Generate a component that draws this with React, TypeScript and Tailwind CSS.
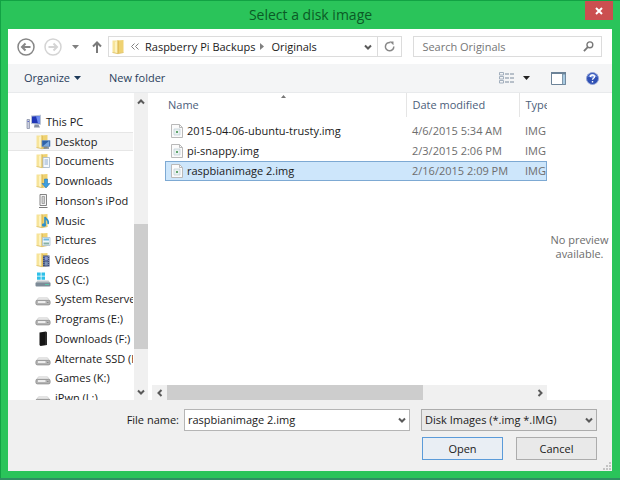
import type { ReactNode } from "react";
import { cx } from "class-variance-authority";

type IconName =
  | "pc"
  | "desktop"
  | "documents"
  | "downloads"
  | "ipod"
  | "music"
  | "pictures"
  | "videos"
  | "system"
  | "drive"
  | "phone";

type Place = { label: string; icon: IconName; root?: boolean };

const places: Place[] = [
  { label: "This PC", icon: "pc", root: true },
  { label: "Desktop", icon: "desktop" },
  { label: "Documents", icon: "documents" },
  { label: "Downloads", icon: "downloads" },
  { label: "Honson's iPod", icon: "ipod" },
  { label: "Music", icon: "music" },
  { label: "Pictures", icon: "pictures" },
  { label: "Videos", icon: "videos" },
  { label: "OS (C:)", icon: "system" },
  { label: "System Reserved", icon: "drive" },
  { label: "Programs (E:)", icon: "drive" },
  { label: "Downloads (F:)", icon: "phone" },
  { label: "Alternate SSD (H:)", icon: "drive" },
  { label: "Games (K:)", icon: "drive" },
  { label: "iPwn (L:)", icon: "drive" },
];

const files = [
  { name: "2015-04-06-ubuntu-trusty.img", date: "4/6/2015 5:34 AM", type: "IMG File" },
  { name: "pi-snappy.img", date: "2/3/2015 2:06 PM", type: "IMG File" },
  { name: "raspbianimage 2.img", date: "2/16/2015 2:09 PM", type: "IMG File" },
];

const chevrons = {
  up: "M2 6.500 5 3.500l3 3",
  down: "M2 3.500 5 6.500l3-3",
  left: "M6.500 2 3.500 5l3 3",
  right: "M3.500 2 6.500 5l-3 3",
};

function Chevron({ to }: { to: keyof typeof chevrons }) {
  return (
    <svg className="size-[10px] shrink-0" fill="none" stroke="#5a5a5a" strokeWidth="2" viewBox="0 0 10 10">
      <path d={chevrons[to]} />
    </svg>
  );
}

function Caret({ color = "#1e3a5a" }: { color?: string }) {
  return (
    <svg className="h-1 w-[7px] shrink-0" viewBox="0 0 7 4">
      <path d="M0 0h7L3.500 4z" fill={color} />
    </svg>
  );
}

function Folder({ children }: { children?: ReactNode }) {
  return (
    <>
      <path d="M1.500 1.500h5v13l-5-1z" fill="#f7e49a" />
      <path d="M6 1.500 12.500 1v12.500L6 14.500z" fill="#efd272" />
      <path d="M4 3 7 1.500v13l-3-1z" fill="#fdf3bf" />
      <path d="M7 1.500v13" stroke="#d6ae45" />
      <path d="M1.500 13.500 7 14.700l5.500-1.200" fill="none" stroke="#dcbc5e" strokeWidth=".8" />
      {children}
    </>
  );
}

const drawings: Record<IconName, ReactNode> = {
  pc: (
    <>
      <path d="M5 1.500 15 .8v10L5 10z" fill="#b9c3d6" />
      <path d="M6 2.500 14 2v7.500L6 9z" fill="#1f35b5" />
      <path d="M10 2.300 14 2v7.500l-2-.1z" fill="#6d8cf0" />
      <path d="M8.500 10.500h4l1.500 3H8z" fill="#8891a3" />
      <path d="M1 5.500h2.500v9H1z" fill="#c9cede" stroke="#7f88a0" strokeWidth=".7" />
      <path d="M1.500 7.500h1.500" stroke="#5965c9" />
    </>
  ),
  desktop: (
    <Folder>
      <path d="M7 6.500h8v6H7z" fill="#2e62a8" stroke="#6f93c4" strokeWidth=".7" />
      <path d="m8 12 6-5v5z" fill="#78a6dd" />
      <path d="M8.500 14h5.500" stroke="#5d6c80" strokeWidth="1.300" />
    </Folder>
  ),
  documents: (
    <Folder>
      <path d="M8 4.500h6.500v10H8z" fill="#f5f9fd" stroke="#a3b6cc" strokeWidth=".8" />
      <path d="M9.500 7H13M9.500 9H13M9.500 11H13" stroke="#8fabcd" />
    </Folder>
  ),
  downloads: (
    <Folder>
      <path d="M9.500 6h3v4.500H15l-4 4.500-4-4.500h2.500z" fill="#3c9fe2" stroke="#1b70b5" strokeWidth=".5" />
    </Folder>
  ),
  ipod: (
    <>
      <path d="M5 1.500h6.500v11H5z" fill="#f4f4f4" stroke="#858585" />
      <path d="M7 3.500h2.500v7H7z" fill="#cfcfcf" stroke="#909090" strokeWidth=".7" />
      <path d="M4 14.500h8.500" stroke="#7a7a7a" />
    </>
  ),
  music: (
    <Folder>
      <path d="M10 11.500V4c1 2.500 4.500 3 3 7" fill="none" stroke="#2f90c8" strokeWidth="1.600" />
      <ellipse cx="9" cy="12" fill="#2f90c8" rx="2.200" ry="1.700" />
    </Folder>
  ),
  pictures: (
    <Folder>
      <path d="M7.500 5.500H15v8H7.500z" fill="#eef7fc" stroke="#a9bfd2" strokeWidth=".8" />
      <path d="M8.500 6.500H14v2H8.500z" fill="#6cb8e2" />
      <path d="M8.500 10.500H14v2H8.500z" fill="#86b0a4" />
    </Folder>
  ),
  videos: (
    <Folder>
      <path d="M8 3.500h6.500v11H8z" fill="#3a4a78" />
      <path d="M9.800 4.500h3v4h-3z" fill="#8596d2" />
      <path d="M9.800 9.500h3v4h-3z" fill="#7f96b8" />
      <path d="M8.900 4v10.500M13.700 4v10.500" stroke="#c8cde0" strokeDasharray="1 1" strokeWidth=".6" />
    </Folder>
  ),
  system: (
    <>
      <path d="M2 .5h3.700v3.200H2zM6.500.5H10v3.200H6.500zM2 4.500h3.700v3.200H2zM6.500 4.500H10v3.200H6.500z" fill="#2fc0e8" />
      <path d="M2.500 8.500h11l2 2.500H.5z" fill="#c3c8cc" />
      <rect fill="#7d8b97" height="4" rx="1" width="15" x=".5" y="10.500" />
      <path d="M10 12.500h4" stroke="#5ac4a8" />
    </>
  ),
  drive: (
    <>
      <path d="M3.500 6.800h9L15 10H1z" fill="#ececec" stroke="#c4c4c4" strokeWidth=".6" />
      <rect fill="#b4b4b4" height="4.600" rx="1.500" stroke="#8c8c8c" strokeWidth=".8" width="14.200" x=".9" y="9.300" />
      <path d="M3 11h7.500" stroke="#ededed" strokeWidth="2" />
      <path d="M12 11.500h1.500" stroke="#8a8a8a" />
    </>
  ),
  phone: (
    <>
      <path d="m4.500 1.500 6.500-1 1 1V14l-6.500 1-1-1z" fill="#161616" />
      <path d="M11 1v13" stroke="#555" strokeWidth=".7" />
    </>
  ),
};

function PlaceIcon({ name }: { name: IconName }) {
  return (
    <svg aria-hidden="true" className="size-4 shrink-0" viewBox="0 0 16 16">
      {drawings[name]}
    </svg>
  );
}

function FileIcon() {
  return (
    <svg aria-hidden="true" className="h-[14px] w-3 shrink-0" viewBox="0 0 12 14">
      <path d="M.5.5h8l3 3v10H.5z" fill="#fbfbfb" stroke="#b9b9b9" />
      <path d="M8.500.5v3h3" fill="none" stroke="#b9b9b9" />
      <path d="M3 5h6v6H3z" fill="#eaf1f0" stroke="#bccbd6" strokeWidth=".7" />
      <path d="M5 7h2v2H5z" fill="#62a56e" />
    </svg>
  );
}

function TitleBar() {
  return (
    <header className="relative flex h-7 shrink-0 items-center justify-center">
      <h1 className="text-sm text-[#0b5a26]">Select a disk image</h1>
      <button
        aria-label="Close"
        className="absolute right-0 top-0 flex h-[19px] w-7 items-center justify-center bg-[#cb4f50]"
        type="button"
      >
        <svg className="size-2" stroke="#fff" strokeWidth="2" viewBox="0 0 8 8">
          <path d="m1 1 6 6M7 1 1 7" />
        </svg>
      </button>
    </header>
  );
}

function NavArrow({ forward }: { forward?: boolean }) {
  return (
    <button aria-label={forward ? "Forward" : "Back"} disabled={forward} type="button">
      <svg
        className="size-[18px]"
        fill="none"
        stroke={forward ? "#d4d4d4" : "#868686"}
        strokeWidth="1.500"
        viewBox="0 0 18 18"
      >
        <circle cx="9" cy="9" r="8" />
        <path
          d={forward ? "M4.500 9h8.500M9.500 5.500 13 9l-3.500 3.500" : "M13.500 9H5M8.500 5.500 5 9l3.500 3.500"}
          strokeWidth="2"
        />
      </svg>
    </button>
  );
}

function AddressRow() {
  return (
    <div className="flex h-[35px] shrink-0 items-center bg-white pl-[9px] pr-[10px]">
      <div className="flex gap-[9px]">
        <NavArrow />
        <NavArrow forward />
      </div>
      <button aria-label="Recent locations" className="ml-[10px]" type="button">
        <Caret color="#808080" />
      </button>
      <button aria-label="Up" className="ml-[13px]" type="button">
        <svg className="h-3 w-[10px]" fill="none" stroke="#7a7a7a" strokeWidth="2" viewBox="0 0 10 12">
          <path d="M5 12V1.500M1 5.500l4-4 4 4" />
        </svg>
      </button>
      <nav
        aria-label="Address"
        className="ml-[6px] flex h-[21px] min-w-0 flex-[293] items-center border border-[#dcdcdc]"
      >
        <svg aria-hidden="true" className="ml-[2px] size-4 shrink-0" viewBox="0 0 16 16">
          <Folder />
        </svg>
        <svg
          aria-hidden="true"
          className="ml-1 h-[7px] w-2"
          fill="none"
          stroke="#808080"
          viewBox="0 0 8 7"
        >
          <path d="m3.500.5-3 3 3 3M7.500.5l-3 3 3 3" />
        </svg>
        <a className="ml-[6px] whitespace-nowrap" href="#backups">
          Raspberry Pi Backups
        </a>
        <svg aria-hidden="true" className="ml-[5px] h-[7px] w-1" viewBox="0 0 4 7">
          <path d="M0 0v7l4-3.500z" fill="#808080" />
        </svg>
        <a className="ml-[7px]" href="#originals">
          Originals
        </a>
        <button aria-label="Previous locations" className="ml-auto mr-1" type="button">
          <Chevron to="down" />
        </button>
        <button
          aria-label="Refresh"
          className="flex h-full w-6 items-center justify-center border-l border-[#dcdcdc]"
          type="button"
        >
          <svg className="size-[11px]" fill="none" stroke="#888" strokeWidth="1.500" viewBox="0 0 11 11">
            <path d="M9.800 5.500A4.200 4.200 0 1 1 6.500 1.500" />
            <path d="M5.500.5h4v3.800z" fill="#888" stroke="none" />
          </svg>
        </button>
      </nav>
      <label className="ml-[11px] flex h-[21px] min-w-0 flex-[172] items-center border border-[#dcdcdc] pl-2 pr-[7px]">
        <input
          aria-label="Search Originals"
          className="w-full min-w-0 outline-none placeholder:text-[#767676]"
          placeholder="Search Originals"
          type="search"
        />
        <svg className="size-[11px] shrink-0" fill="none" stroke="#777" strokeWidth="1.500" viewBox="0 0 12 12">
          <circle cx="7.500" cy="4.200" r="3.200" />
          <path d="M5.200 6.700 1 11" strokeWidth="2" />
        </svg>
      </label>
    </div>
  );
}

function CommandBar() {
  return (
    <div className="flex h-[29px] shrink-0 items-center border-b border-[#e8eaec] bg-[#f4f5f6] pl-4 pr-[13px] text-[#2b3f5c]">
      <button className="flex items-center gap-1" type="button">
        Organize
        <Caret />
      </button>
      <button className="ml-7" type="button">
        New folder
      </button>
      <button aria-label="Change your view" className="ml-auto flex items-center gap-[9px]" type="button">
        <svg className="h-3 w-[15px]" fill="none" viewBox="0 0 15 12">
          <path d="M.5.5h4v2.500h-4zM.5 4.500h4V7h-4zM.5 8.500h4V11h-4z" stroke="#9aa8b8" strokeWidth=".9" />
          <path d="M6 2h4M11 2h4M6 6h4M11 6h4M6 10h4M11 10h4" stroke="#7a8a9c" />
        </svg>
        <Caret color="#222" />
      </button>
      <button aria-label="Show the preview pane" className="ml-[21px]" type="button">
        <svg className="h-[13px] w-[15px]" viewBox="0 0 15 13">
          <path d="M.5.5h14v12H.5z" fill="#fff" stroke="#6c8398" />
          <path d="M0 1h15" stroke="#6c8398" strokeWidth="2" />
          <path d="M11.500 2h3v10.500h-3z" fill="#a9cbe2" stroke="#6c8398" strokeWidth=".8" />
        </svg>
      </button>
      <button aria-label="Help" className="ml-5" type="button">
        <svg className="size-[13px]" viewBox="0 0 13 13">
          <circle cx="6.500" cy="6.500" fill="#2f50b4" r="6" stroke="#93a4d6" />
          <path d="M2 4.500a5 5 0 0 1 9 0c-3 1.500-6 1.500-9 0" fill="#7f9be2" />
          <path d="M4.500 5c0-2.600 4-2.600 4-.2 0 1.500-2 1.400-2 3M6.500 9v1.400" fill="none" stroke="#fff" strokeWidth="1.400" />
        </svg>
      </button>
    </div>
  );
}

function PlacesPane() {
  return (
    <aside className="flex w-[140px] shrink-0 bg-white">
      <ul className="mt-[19px] flex h-[296px] min-w-0 flex-1 flex-col">
        {places.map((place) => (
          <li
            className={cx(
              "flex flex-1 items-center gap-1 overflow-hidden border-y whitespace-nowrap",
              place.root ? "pl-[18px]" : "pl-[27px]",
              place.label === "Desktop" ? "border-[#e6e6e6] bg-[#f6f6f6]" : "border-transparent",
            )}
            key={place.label}
          >
            <PlaceIcon name={place.icon} />
            {place.label}
          </li>
        ))}
      </ul>
      <div className="ml-px flex w-[14px] flex-col items-center bg-[#f0f0f0]">
        <button aria-label="Scroll up" className="flex h-[17px] items-center" type="button">
          <Chevron to="up" />
        </button>
        <div className="flex-[114]" />
        <div className="w-full flex-[125] bg-[#cdcdcd]" />
        <div className="flex-[34]" />
        <button aria-label="Scroll down" className="flex h-[17px] items-center" type="button">
          <Chevron to="down" />
        </button>
      </div>
    </aside>
  );
}

function FileList() {
  return (
    <section className="flex min-w-0 flex-1 flex-col bg-white pl-1">
      <div className="min-h-0 flex-1 overflow-hidden pl-[13px]">
        <table className="w-full table-fixed border-collapse text-left">
          <colgroup>
            <col />
            <col className="w-[113px]" />
            <col className="w-7" />
          </colgroup>
          <thead className="text-[#4c607a]">
            <tr className="h-6">
              <th className="relative p-0 pl-[3px] font-normal">
                Name
                <svg aria-hidden="true" className="absolute left-[115px] top-px h-1 w-[7px]" viewBox="0 0 7 4">
                  <path d="M1 4h5L3.500 1z" fill="#777" />
                </svg>
              </th>
              <th className="border-l border-[#e5e5e5] p-0 pl-[6px] font-normal">Date modified</th>
              <th className="overflow-hidden border-l border-[#e5e5e5] p-0 pl-[6px] font-normal">Type</th>
            </tr>
            <tr className="h-1" />
          </thead>
          <tbody>
            {files.map((file) => {
              const selected = file.name === "raspbianimage 2.img";
              return (
                <tr
                  className={cx(
                    "h-5 whitespace-nowrap",
                    selected && "bg-[#cde6fb] outline outline-1 -outline-offset-1 outline-[#7da9d3]",
                  )}
                  key={file.name}
                >
                  <td className="p-0 pl-[6px]">
                    <span className="flex items-center gap-1">
                      <FileIcon />
                      {file.name}
                    </span>
                  </td>
                  <td className="p-0 pl-[6px] text-[#6d6d6d]">{file.date}</td>
                  <td className="p-0 pl-[6px] text-[#6d6d6d]">
                    <span className="block w-[21px] overflow-hidden">{file.type}</span>
                  </td>
                </tr>
              );
            })}
          </tbody>
        </table>
      </div>
      <div className="flex h-[15px] shrink-0 items-center bg-[#f0f0f0]">
        <button aria-label="Scroll left" className="flex w-[15px] justify-center" type="button">
          <Chevron to="left" />
        </button>
        <div className="h-full flex-[255] bg-[#cdcdcd]" />
        <div className="flex-[109]" />
        <button aria-label="Scroll right" className="flex w-[15px] justify-center" type="button">
          <Chevron to="right" />
        </button>
      </div>
    </section>
  );
}

function Footer() {
  return (
    <footer className="relative flex h-[71px] shrink-0 flex-col gap-[6px] bg-[#f0f0f0] pl-4 pr-[15px] pt-[9px]">
      <div className="flex h-[22px] items-center">
        <label className="w-[155px] shrink-0 text-right" htmlFor="file-name">
          File name:
        </label>
        <div className="ml-[5px] flex h-full min-w-0 flex-[219] items-center border border-[#b5b5b5] bg-white pl-[3px] pr-[2px]">
          <input
            className="w-full min-w-0 outline-none"
            defaultValue="raspbianimage 2.img"
            id="file-name"
            type="text"
          />
          <button aria-label="Previous file names" type="button">
            <Chevron to="down" />
          </button>
        </div>
        <div className="relative ml-[11px] flex h-full min-w-0 flex-[176] items-center">
          <select
            aria-label="File type"
            className="h-full w-full appearance-none border border-[#acacac] bg-[#e9e9e9] pl-[3px] outline-none"
          >
            <option>Disk Images (*.img *.IMG)</option>
          </select>
          <span className="pointer-events-none absolute right-[3px]">
            <Chevron to="down" />
          </span>
        </div>
      </div>
      <div className="flex justify-end gap-[13px]">
        <button className="h-[23px] w-[81px] border border-[#5b9bd9] bg-[#e9eef4]" type="button">
          Open
        </button>
        <button className="h-[23px] w-[81px] border border-[#acacac] bg-[#e9e9e9]" type="button">
          Cancel
        </button>
      </div>
      <svg aria-hidden="true" className="absolute bottom-px right-px size-2" fill="#c4c4c4" viewBox="0 0 8 8">
        <path d="M6 0h2v2H6zM3 3h2v2H3zM6 3h2v2H6zM0 6h2v2H0zM3 6h2v2H3zM6 6h2v2H6z" />
      </svg>
    </footer>
  );
}

export default function App() {
  return (
    <div className="flex h-screen flex-col bg-[#2f8f62] pb-[2px] font-['Open_Sans','Noto_Sans',sans-serif] text-[11px] leading-4 text-[#1a1a1a]">
      <main className="flex min-h-0 flex-1 flex-col border-l border-t border-[#12a244] bg-[#2ac45a] pb-[7px] pl-[7px] pr-[7px]">
        <TitleBar />
        <div className="mr-px flex min-h-0 flex-1 flex-col">
          <AddressRow />
          <CommandBar />
          <div className="flex min-h-0 flex-1 overflow-hidden">
            <PlacesPane />
            <FileList />
            <p className="flex w-[65px] shrink-0 items-center justify-center bg-white text-center leading-[14px] text-[#6d6d6d]">
              No preview available.
            </p>
          </div>
          <Footer />
        </div>
      </main>
    </div>
  );
}
